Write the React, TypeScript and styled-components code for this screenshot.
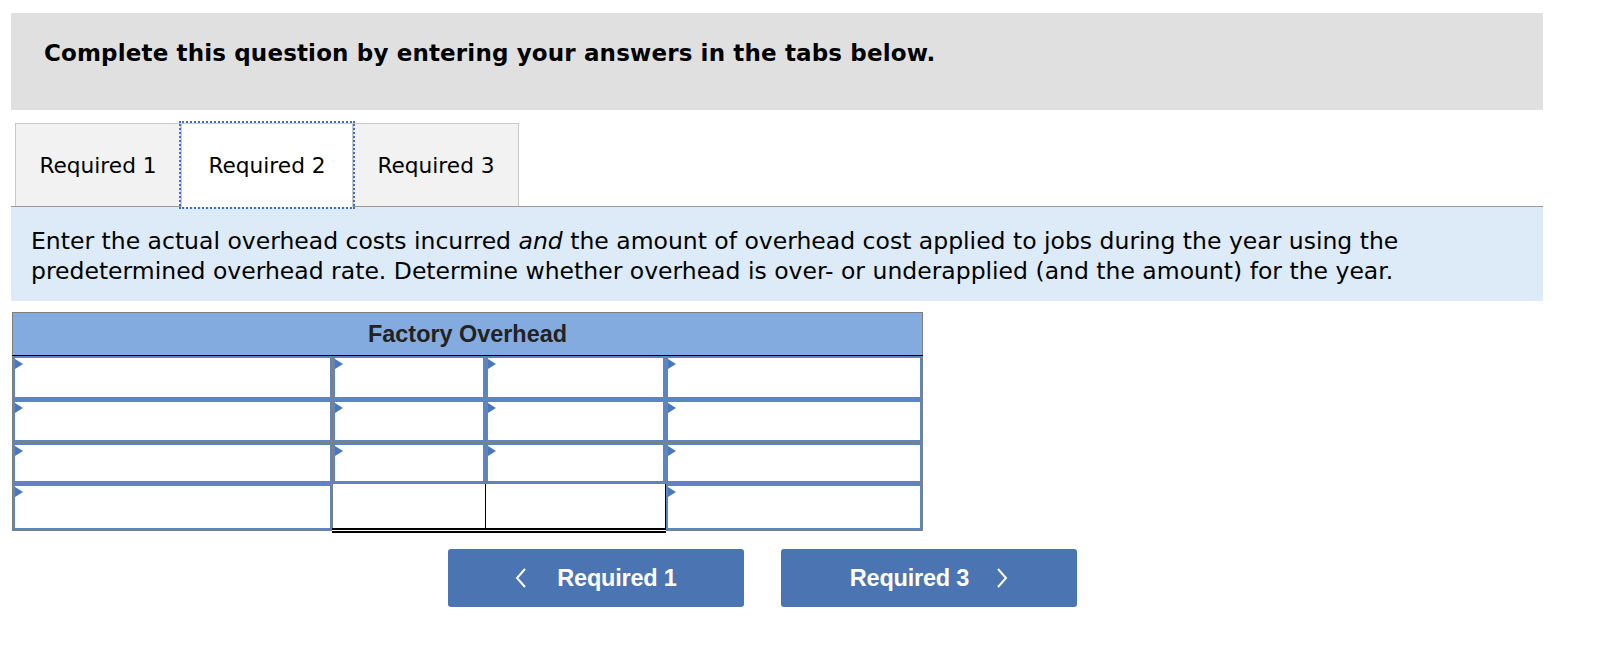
import React from 'react'
import styled, { createGlobalStyle } from 'styled-components'

const GlobalStyle = createGlobalStyle`
  body {
    margin: 0;
    background: #fff;
    font-family: 'DejaVu Sans', Verdana, sans-serif;
  }
`

const Page = styled.div`
  width: 1532px;
  padding: 13px 0 0 11px;
  display: flex;
  flex-direction: column;
`

const Banner = styled.div`
  height: 97px;
  box-sizing: border-box;
  background: #e0e0e0;
  padding: 27px 0 0 33px;
  font-size: 23px;
  letter-spacing: 0.15px;
  font-weight: bold;
  color: #000;
`

const TabBar = styled.div`
  margin-top: 13px;
  display: flex;
  padding-left: 4px;
  border-bottom: 1px solid #999;
`

const Tab = styled.div<{ $active?: boolean; $width: number }>`
  width: ${(p) => p.$width}px;
  box-sizing: border-box;
  display: flex;
  align-items: center;
  justify-content: center;
  font-size: 21.7px;
  color: #000;
  background: ${(p) => (p.$active ? '#fff' : '#f2f2f2')};
  border: 1px solid #c8c8c8;
  border-bottom: none;
  margin-bottom: ${(p) => (p.$active ? '-1px' : '0')};
  height: ${(p) => (p.$active ? '84px' : '83px')};
  outline: ${(p) => (p.$active ? '2px dotted #4170c4' : 'none')};
  position: relative;
  z-index: ${(p) => (p.$active ? 1 : 0)};
`

const Instructions = styled.div`
  background: #ddeaf7;
  height: 94px;
  box-sizing: border-box;
  padding: 19px 20px 0;
  font-size: 23.5px;
  line-height: 30px;
  color: #000;
`

const Sheet = styled.table`
  margin-top: 11px;
  margin-left: 1px;
  width: 910px;
  border-collapse: collapse;
  table-layout: fixed;
  border: 1px solid #7f7f7f;
`

const HeadCell = styled.th`
  height: 42px;
  padding: 0;
  background: #84abdf;
  border-bottom: 1px solid #000;
  font-family: 'Liberation Sans', Arial, sans-serif;
  font-size: 23.4px;
  font-weight: bold;
  color: #222;
  text-align: center;
`

const Cell = styled.td<{ $total?: boolean; $topRule?: boolean }>`
  padding: 0;
  border: 1px solid ${(p) => (p.$total ? '#000' : '#7f7f7f')};
  border-top: 1px solid ${(p) => (p.$topRule || p.$total ? '#000' : '#7f7f7f')};
  border-bottom: ${(p) => (p.$total ? '5px double #000' : '1px solid #7f7f7f')};
  vertical-align: top;
`

const InputBox = styled.div<{ $height: number }>`
  position: relative;
  height: ${(p) => p.$height}px;
  box-sizing: border-box;
  border: 2px solid #5d85c2;
  background: #fff;
`

const Marker = styled.span`
  position: absolute;
  top: 1px;
  left: 0;
  width: 0;
  height: 0;
  border-left: 8px solid #4a78ba;
  border-top: 5px solid transparent;
  border-bottom: 5px solid transparent;
`

const NavRow = styled.div`
  margin-top: 16px;
  display: flex;
  gap: 37px;
  padding-left: 437px;
`

const NavButton = styled.button<{ $gap: number }>`
  width: 296px;
  height: 58px;
  border: none;
  border-radius: 3px;
  background: #4a74b2;
  color: #fff;
  font-family: 'Liberation Sans', Arial, sans-serif;
  font-size: 23.5px;
  font-weight: bold;
  display: flex;
  align-items: center;
  justify-content: center;
  gap: ${(p) => p.$gap}px;
  padding: 0;
  letter-spacing: -0.2px;
`

const Chevron = ({ dir }: { dir: 'left' | 'right' }) => (
  <svg width="12" height="22" viewBox="0 0 12 22">
    <polyline
      points={dir === 'left' ? '10,2 2,11 10,20' : '2,2 10,11 2,20'}
      fill="none"
      stroke="#fff"
      strokeWidth="2"
    />
  </svg>
)

const Entry = ({ height }: { height: number }) => (
  <InputBox $height={height}>
    <Marker />
  </InputBox>
)

const rowHeights = [43, 42, 40]

const App = () => (
  <>
    <GlobalStyle />
    <Page>
      <Banner>Complete this question by entering your answers in the tabs below.</Banner>
      <TabBar>
        <Tab $width={166}>Required 1</Tab>
        <Tab $width={172} $active>
          Required 2
        </Tab>
        <Tab $width={166}>Required 3</Tab>
      </TabBar>
      <Instructions>
        Enter the actual overhead costs incurred <i>and</i> the amount of overhead cost applied to jobs
        during the year using the
        <br />
        predetermined overhead rate. Determine whether overhead is over- or underapplied (and the
        amount) for the year.
      </Instructions>
      <Sheet>
        <colgroup>
          <col style={{ width: 320 }} />
          <col style={{ width: 153 }} />
          <col style={{ width: 180 }} />
          <col style={{ width: 257 }} />
        </colgroup>
        <thead>
          <tr>
            <HeadCell colSpan={4}>Factory Overhead</HeadCell>
          </tr>
        </thead>
        <tbody>
          {rowHeights.map((h, row) => (
            <tr key={row}>
              {[0, 1, 2, 3].map((col) => (
                <Cell key={col}>
                  <Entry height={h} />
                </Cell>
              ))}
            </tr>
          ))}
          <tr>
            <Cell $topRule>
              <Entry height={46} />
            </Cell>
            <Cell $total />
            <Cell $total />
            <Cell $topRule>
              <Entry height={46} />
            </Cell>
          </tr>
        </tbody>
      </Sheet>
      <NavRow>
        <NavButton $gap={30}>
          <Chevron dir="left" />
          Required 1
        </NavButton>
        <NavButton $gap={27}>
          Required 3
          <Chevron dir="right" />
        </NavButton>
      </NavRow>
    </Page>
  </>
)

export default App
